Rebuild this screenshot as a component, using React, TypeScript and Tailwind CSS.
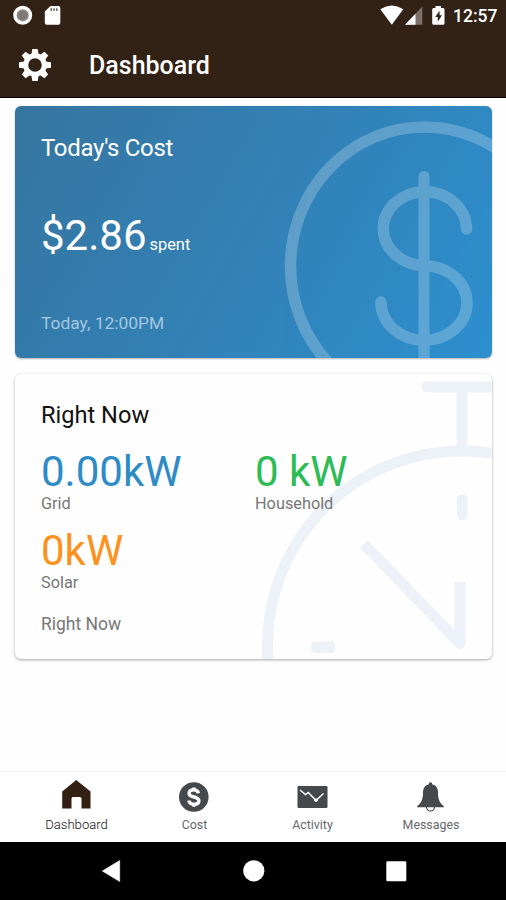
import React from "react";

function StatusBar() {
  return (
    <div className="flex h-8 items-center justify-between">
      <svg className="h-8 w-[70px]" viewBox="0 0 70 32">
        <circle cx="22.7" cy="15.3" r="7.8" fill="#8f8a86" stroke="#fff" strokeWidth="3.4" />
        <circle cx="22.7" cy="15.3" r="4.6" fill="#7d7976" />
        <path d="M50.5 6H58.3Q60.3 6 60.3 8V22.8Q60.3 24.8 58.3 24.8H46.8Q44.8 24.8 44.8 22.8V11.5Z" fill="#fff" />
        <path d="M51.2 8.3v2.8M54 8.3v2.8M56.8 8.3v2.8" stroke="#5a4d44" strokeWidth="1.3" />
      </svg>
      <div className="flex items-center">
        <svg className="h-8 w-[70px]" viewBox="383 0 70 32" overflow="visible">
          <path d="M380.3 9.2Q391.8 1.8 403.3 9.2L391.8 24.8Z" fill="#fff" />
          <path d="M422.3 6.5V24.8H405Z" fill="#7b706a" />
          <path d="M415.5 13.8V24.8H405Z" fill="#fff" />
          <path d="M435.5 6H441V8H443Q444.5 8 444.5 9.5V23.3Q444.5 24.8 443 24.8H433.7Q432.2 24.8 432.2 23.3V9.5Q432.2 8 433.7 8H435.5Z" fill="#fff" />
          <path d="M439.6 10.8L435.2 17.1H437.8V21.8L442 15.3H439.6Z" fill="#322216" />
        </svg>
        <span className="mr-[9px] w-[44px] whitespace-nowrap text-right text-[17.5px] font-medium leading-8">12:57</span>
      </div>
    </div>
  );
}

const gearTeeth = [0, 45, 90, 135, 180, 225, 270, 315];

function Header() {
  return (
    <header className="h-[98px] border-b border-black bg-[#322216] text-white">
      <StatusBar />
      <div className="flex h-[66px] items-center pl-[19px]">
        <svg className="h-8 w-8" viewBox="-16 -16 32 32">
          <circle r="9.3" fill="none" stroke="#fff" strokeWidth="5" />
          {gearTeeth.map((a) => (
            <path key={a} d="M-3.6 -10.5L-2.7 -16H2.7L3.6 -10.5Z" fill="#fff" transform={`rotate(${a})`} />
          ))}
        </svg>
        <h1 className="ml-[38px] pt-[2px] text-[25px] font-medium leading-8">Dashboard</h1>
      </div>
    </header>
  );
}

function CostCard() {
  return (
    <section className="relative h-[252px] overflow-hidden rounded-[6px] bg-linear-[120deg,#36759f_0%,#3281b6_50%,#2e90cf_100%] px-[26px] text-white shadow-[0_1px_2px_rgba(0,0,0,0.3)]">
      <svg className="absolute inset-0 h-full w-full" viewBox="15 106 477 252">
        <g opacity="0.22" fill="none" stroke="#fff" strokeWidth="11.5" strokeLinecap="round">
          <ellipse cx="424.5" cy="266" rx="134" ry="139" />
          <path d="M424 176.5V370" strokeWidth="11" />
          <path d="M466.5 229A42.5 37.5 0 0 0 424 191.5A43 37.2 0 0 0 424 265.8A43 37.2 0 0 1 424 340.2A43 38 0 0 1 381 302" />
        </g>
      </svg>
      <div className="relative">
        <h2 className="pt-[26px] text-[24px] leading-8 tracking-[-0.33px]">Today's Cost</h2>
        <p className="mt-[47px] flex items-baseline leading-[50px]">
          <span className="text-[42px]">$2.86</span>
          <span className="ml-[3px] text-[16.4px]">spent</span>
        </p>
        <p className="mt-[41px] text-[17.4px] leading-6 text-[#a3c7e0]">Today, 12:00PM</p>
      </div>
    </section>
  );
}

function Reading({ value, label, tone }: { value: string; label: string; tone: string }) {
  return (
    <div className="h-[79px]">
      <p className={`text-[42px] leading-[46px] ${tone}`}>{value}</p>
      <p className="text-[16.3px] leading-[18px] text-[#777]">{label}</p>
    </div>
  );
}

function NowCard() {
  return (
    <section className="relative mt-4 h-[285px] overflow-hidden rounded-[6px] bg-[#fefefe] px-[26px] shadow-[0_1px_3px_rgba(0,0,0,0.35)]">
      <svg className="absolute inset-0 h-full w-full" viewBox="15 374 477 285">
        <g fill="none" stroke="#edf2f8" strokeWidth="11">
          <circle cx="462" cy="645.5" r="194.5" />
          <path d="M427 387H500" strokeLinecap="round" />
          <path d="M462 387V451" />
          <path d="M364 544L460 643.5V582" strokeLinejoin="round" />
        </g>
        <rect x="457" y="494.5" width="10.5" height="25.5" rx="4.5" fill="#edf2f8" />
        <rect x="311" y="641.5" width="24" height="11.5" rx="4" fill="#edf2f8" />
      </svg>
      <div className="relative">
        <h2 className="pt-[25px] text-[23.6px] leading-8 text-[#111]">Right Now</h2>
        <div className="mt-[18px] grid grid-cols-[214px_1fr]">
          <Reading value="0.00kW" label="Grid" tone="text-[#2d8bc6]" />
          <Reading value="0 kW" label="Household" tone="text-[#2dbb55]" />
          <Reading value="0kW" label="Solar" tone="text-[#fb9220]" />
        </div>
        <p className="mt-[5px] text-[17.5px] leading-6 text-[#777]">Right Now</p>
      </div>
    </section>
  );
}

function TabBar() {
  return (
    <nav className="mt-auto flex h-[71px] justify-center border-t border-[#f1f1f1] bg-white pt-[8px] text-[12.4px] leading-[18px] text-[#66696b]">
      <div className="flex w-[118px] flex-col items-center text-[#111]">
        <svg className="h-[36px] w-[34px]" viewBox="58.5 780 34 36">
          <path d="M75.7 780L90 791.5V808.5H81V798.5Q81 797 79.5 797H72.5Q71 797 71 798.5V808.5H61.7V791.5Z" fill="#342012" />
        </svg>
        <span className="pl-px text-[13.1px] font-light">Dashboard</span>
      </div>
      <div className="flex w-[118px] flex-col items-center">
        <svg className="h-[36px] w-[34px]" viewBox="177.5 780 34 36">
          <circle cx="194.3" cy="797" r="14.8" fill="#46494c" />
          <path d="M199 793.2C198.3 790.6 196.5 789.9 194.3 789.9C191.5 789.9 189.6 791.2 189.6 793.4C189.6 798.3 199.4 795.7 199.4 800.8C199.4 803 197.3 804.3 194.5 804.3C191.8 804.3 189.8 803 189.3 800.5M194.4 787.5V790.5M194.4 804V806.8" fill="none" stroke="#fff" strokeWidth="3.4" />
        </svg>
        <span className="pl-px">Cost</span>
      </div>
      <div className="flex w-[118px] flex-col items-center">
        <svg className="h-[36px] w-[34px]" viewBox="295 780 34 36">
          <rect x="297.5" y="786" width="30" height="22" rx="1.2" fill="#46494c" />
          <path d="M300 790L305.5 794.5L308.3 792.5L316 800.5L323.5 793.5" fill="none" stroke="#fff" strokeWidth="1.5" />
          <circle cx="316" cy="800.3" r="1.8" fill="#fff" />
        </svg>
        <span className="pl-px">Activity</span>
      </div>
      <div className="flex w-[118px] flex-col items-center">
        <svg className="h-[36px] w-[34px]" viewBox="413 780 34 36">
          <circle cx="430.5" cy="807" r="4" fill="#fff" stroke="#46494c" strokeWidth="1.2" />
          <path d="M429 782.5H432V784.3C436 785 438 788.5 438 792.5C438 799.5 440 803.5 443.8 806V807.3H417.2V806C421 803.5 423 799.5 423 792.5C423 788.5 425 785 429 784.3Z" fill="#46494c" />
        </svg>
        <span className="pl-0.5">Messages</span>
      </div>
    </nav>
  );
}

function SystemNav() {
  return (
    <div className="h-[58px] bg-black">
      <svg className="h-full w-full" viewBox="0 842 506 58" fill="#fff">
        <path d="M102.3 871L119.7 860.5V881.5Z" stroke="#fff" strokeWidth="0.6" strokeLinejoin="round" />
        <circle cx="253.8" cy="870.8" r="10.6" />
        <rect x="386.3" y="861.3" width="20" height="20" rx="1.2" />
      </svg>
    </div>
  );
}

export default function App() {
  return (
    <div className="flex h-[900px] w-[506px] flex-col overflow-hidden bg-[#fefefe] font-[Roboto,sans-serif]">
      <Header />
      <main className="pl-[15px] pr-[14px] pt-2">
        <CostCard />
        <NowCard />
      </main>
      <TabBar />
      <SystemNav />
    </div>
  );
}
